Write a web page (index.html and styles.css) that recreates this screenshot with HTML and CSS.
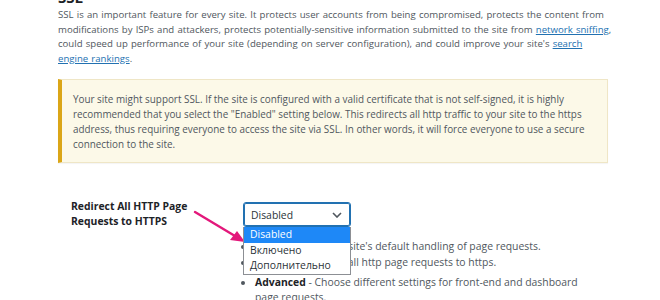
FILE: index.html
```html
<!DOCTYPE html>
<html>
<head>
    <link rel="stylesheet" href="styles.css">
</head>
<body>
    <div class="wrap">
        <h2 class="title">SSL</h2>
        <p class="intro">SSL is an important feature for every site. It protects user accounts from being compromised, protects the content from modifications by ISPs and attackers, protects potentially-sensitive information submitted to the site from <a href="#">network sniffing</a>, could speed up performance of your site (depending on server configuration), and could improve your site's <a href="#">search engine rankings</a>.</p>

        <div class="notice">
            <p>Your site might support SSL. If the site is configured with a valid certificate that is not self-signed, it is highly recommended that you select the "Enabled" setting below. This redirects all http traffic to your site to the https address, thus requiring everyone to access the site via SSL. In other words, it will force everyone to use a secure connection to the site.</p>
        </div>

        <div class="setting">
            <div class="setting-label">Redirect All HTTP Page Requests to HTTPS</div>
            <div class="setting-field">
                <div class="select-wrap">
                    <div class="select">
                        <span>Disabled</span>
                        <svg class="chevron" width="10" height="6" viewBox="0 0 10 6">
                            <path d="M1 1 L5 5 L9 1" fill="none" stroke="#50575e" stroke-width="1.6"/>
                        </svg>
                    </div>
                    <ul class="options">
                        <li class="selected">Disabled</li>
                        <li>Включено</li>
                        <li>Дополнительно</li>
                    </ul>
                </div>
                <ul class="desc">
                    <li><b>Disabled</b> - Use the site's default handling of page requests.</li>
                    <li><b>Enabled</b> - Redirect all http page requests to https.</li>
                    <li><b>Advanced</b> - Choose different settings for front-end and dashboard page requests.</li>
                </ul>
            </div>
        </div>

        <svg class="pointer" width="60" height="40" viewBox="0 0 60 40">
            <line x1="2" y1="2" x2="42" y2="26" stroke="#e3187b" stroke-width="2.4" stroke-linecap="round"/>
            <polygon points="52,32 37,30 44,21" fill="#e3187b"/>
        </svg>
    </div>
</body>
</html>
```

FILE: styles.css
```css
body {
    margin: 0;
    background: #fff;
    font-family: "Open Sans", sans-serif;
    font-size: 9.8px;
    color: #50575e;
    overflow: hidden;
}
.wrap {
    position: relative;
    width: 550px;
    padding-left: 58px;
}
.title {
    margin: -12px 0 0;
    font-size: 15px;
    line-height: 18px;
    font-weight: 700;
    color: #1d2327;
}
.intro {
    margin: 2px -5px 0 0;
    font-size: 9.6px;
    word-spacing: 0.7px;
    line-height: 14.6px;
}
.intro a {
    color: #2271b1;
}
.notice {
    margin-top: 13px;
    background: #fcf9e8;
    border: 1px solid #efe6c6;
    border-left: 4px solid #dba617;
    padding: 12px 14px 10px 11px;
    box-shadow: 0 1px 1px rgba(0, 0, 0, 0.04);
}
.notice p {
    margin: 0;
    font-size: 9.9px;
    line-height: 15px;
}
.setting {
    display: flex;
    margin-top: 36px;
    padding-left: 13px;
}
.setting-label {
    width: 147px;
    padding-right: 25px;
    flex: none;
    font-size: 10.4px;
    font-weight: 700;
    line-height: 15px;
    color: #1d2327;
}
.setting-field {
    flex: 1;
    padding-top: 3px;
}
.select-wrap {
    position: relative;
    width: 108px;
}
.select {
    box-sizing: border-box;
    height: 25px;
    display: flex;
    align-items: center;
    justify-content: space-between;
    padding: 0 8px 0 7px;
    border: 1px solid #2271b1;
    border-radius: 3px;
    box-shadow: 0 0 0 1px #2271b1 inset;
    color: #2c3338;
    font-size: 10.4px;
}
.options {
    position: absolute;
    top: 25px;
    left: 0;
    width: 106px;
    margin: 0;
    padding: 0;
    list-style: none;
    background: #fff;
    border: 1px solid #8c8f94;
    border-top: none;
    font-size: 10.4px;
    color: #2c3338;
    z-index: 2;
}
.options li {
    height: 15.5px;
    line-height: 15.5px;
    padding-left: 6px;
}
.options li.selected {
    background: #1e88f7;
    color: #fff;
}
.desc {
    margin: 12px 0 0;
    padding: 0 14px 0 12px;
    font-size: 10.4px;
    line-height: 15px;
}
.desc li {
    margin-bottom: 1px;
}
.desc li:last-child {
    margin-top: 5px;
}
.desc b {
    color: #1d2327;
}
.pointer {
    position: absolute;
    left: 193px;
    top: 222px;
}
```
